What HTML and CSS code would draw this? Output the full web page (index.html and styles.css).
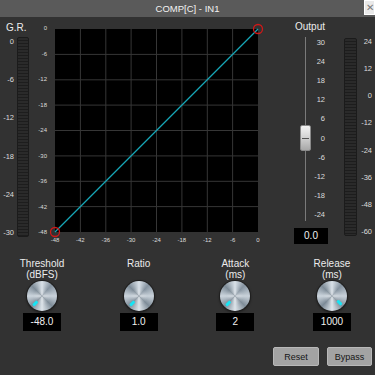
FILE: index.html
```html
<!DOCTYPE html>
<html>
<head>
<meta charset="utf-8">
<link rel="stylesheet" href="styles.css">
</head>
<body>
<div class="app">
  <header class="titlebar">
    <span class="tb-side"></span>
    <span class="title">COMP[C] - IN1</span>
    <span class="tb-side tb-right"><span class="close">✕</span></span>
  </header>

  <main class="main">
    <section class="gr">
      <div class="heading gr-title">G.R.</div>
      <div class="meter-row">
        <div class="scale scale-gr"><span>0</span><span>-6</span><span>-12</span><span>-18</span><span>-24</span><span>-30</span></div>
        <div class="meter gr-meter"></div>
      </div>
    </section>

    <section class="chart">
      <div class="chart-row">
        <div class="scale scale-y"><span>0</span><span>-6</span><span>-12</span><span>-18</span><span>-24</span><span>-30</span><span>-36</span><span>-42</span><span>-48</span></div>
        <svg class="graph" width="203" height="203" viewBox="0 0 203 203">
          <rect x="0" y="0" width="203" height="203" fill="#000"/>
          <g stroke="#363636" stroke-width="1">
            <line x1="25.4" y1="0" x2="25.4" y2="203"/>
            <line x1="50.8" y1="0" x2="50.8" y2="203"/>
            <line x1="76.1" y1="0" x2="76.1" y2="203"/>
            <line x1="101.5" y1="0" x2="101.5" y2="203"/>
            <line x1="126.9" y1="0" x2="126.9" y2="203"/>
            <line x1="152.3" y1="0" x2="152.3" y2="203"/>
            <line x1="177.6" y1="0" x2="177.6" y2="203"/>
            <line x1="0" y1="25.4" x2="203" y2="25.4"/>
            <line x1="0" y1="50.8" x2="203" y2="50.8"/>
            <line x1="0" y1="76.1" x2="203" y2="76.1"/>
            <line x1="0" y1="101.5" x2="203" y2="101.5"/>
            <line x1="0" y1="126.9" x2="203" y2="126.9"/>
            <line x1="0" y1="152.3" x2="203" y2="152.3"/>
            <line x1="0" y1="177.6" x2="203" y2="177.6"/>
          </g>
          <line x1="0" y1="203" x2="203" y2="0" stroke="#16a6b6" stroke-width="1.3"/>
          <circle cx="203" cy="0" r="4.5" fill="none" stroke="#d01818" stroke-width="1.3"/>
          <circle cx="0" cy="203" r="4.5" fill="none" stroke="#d01818" stroke-width="1.3"/>
        </svg>
      </div>
      <div class="scale-x"><span>-48</span><span>-42</span><span>-36</span><span>-30</span><span>-24</span><span>-18</span><span>-12</span><span>-6</span><span>0</span></div>
    </section>

    <section class="output">
      <div class="out-left">
        <div class="heading out-title">Output</div>
        <div class="fader-row">
          <div class="fader">
            <div class="track track-top"></div>
            <div class="thumb"><span class="thumb-line"></span></div>
            <div class="track track-bottom"></div>
          </div>
          <div class="scale scale-out"><span>30</span><span>24</span><span>18</span><span>12</span><span>6</span><span>0</span><span>-6</span><span>-12</span><span>-18</span><span>-24</span></div>
        </div>
        <div class="valbox out-val">0.0</div>
      </div>
      <div class="out-meter">
        <div class="meter om-meter"></div>
        <div class="scale scale-om"><span>24</span><span>12</span><span>0</span><span>-12</span><span>-24</span><span>-36</span><span>-48</span><span>-60</span></div>
      </div>
    </section>
  </main>

  <section class="knobs">
    <div class="knob-col">
      <div class="knob-label">Threshold<br>(dBFS)</div>
      <div class="knob"><span class="ind ind-min"></span></div>
      <div class="valbox kval">-48.0</div>
    </div>
    <div class="knob-col">
      <div class="knob-label">Ratio</div>
      <div class="knob"><span class="ind ind-min"></span></div>
      <div class="valbox kval">1.0</div>
    </div>
    <div class="knob-col">
      <div class="knob-label">Attack<br>(ms)</div>
      <div class="knob"><span class="ind ind-min"></span></div>
      <div class="valbox kval">2</div>
    </div>
    <div class="knob-col">
      <div class="knob-label">Release<br>(ms)</div>
      <div class="knob"><span class="ind ind-max"></span></div>
      <div class="valbox kval">1000</div>
    </div>
  </section>

  <footer class="buttons">
    <button class="btn">Reset</button>
    <button class="btn">Bypass</button>
  </footer>
</div>
</body>
</html>
```

FILE: styles.css
```css
* { box-sizing: border-box; }
html, body { margin: 0; padding: 0; }
body {
  width: 375px;
  height: 375px;
  overflow: hidden;
  background: #323232;
  font-family: "Liberation Sans", Arial, sans-serif;
  color: #e4e4e4;
}
.app { width: 375px; height: 375px; display: flex; flex-direction: column; }

/* title bar */
.titlebar {
  height: 17px;
  background: #5a5a5a;
  display: grid;
  grid-template-columns: 1fr auto 1fr;
  align-items: start;
}
.title { font-size: 9.5px; line-height: 17px; color: #f2f2f2; }
.tb-right { display: flex; justify-content: flex-end; }
.close {
  width: 11px; height: 15px;
  background: #e9e9e9;
  border: 1px solid #ffffff;
  color: #7a7a7a;
  font-size: 10px;
  line-height: 13px;
  text-align: center;
}

/* main */
.main { height: 233px; display: flex; align-items: flex-start; }

.heading { font-size: 10px; line-height: 12px; color: #ececec; }

.scale { display: flex; flex-direction: column; justify-content: space-between; font-size: 7.5px; color: #dcdcdc; text-align: right; }
.scale span { display: block; line-height: 9px; }

.meter {
  border: 1px solid #1b1b1b;
  border-radius: 2px;
  background: repeating-linear-gradient(to bottom, #2a2a2a 0 2px, #1d1d1d 2px 3px);
}

.gr { width: 29px; padding-top: 5px; }
.gr-title { padding-left: 6px; }
.meter-row { display: flex; margin-top: 3px; height: 200px; gap: 3px; }
.scale-gr { width: 14px; }
.gr-meter { width: 12px; }

.chart { width: 229px; padding-top: 7px; }
.chart-row { display: flex; align-items: flex-start; gap: 8px; }
.scale-y { width: 18px; height: 212px; font-size: 6px; }
.scale-y span { line-height: 8px; }
.graph { display: block; margin-top: 5px; overflow: visible; flex: none; }
.scale-x { display: flex; justify-content: space-between; width: 223px; margin-left: 16px; font-size: 6px; color: #dcdcdc; }
.scale-x span { width: 20px; text-align: center; line-height: 8px; }

.output { display: flex; padding-left: 32px; }
.out-left { width: 40px; padding-top: 4px; }
.out-title { text-align: center; }
.fader-row { display: flex; margin-top: 4px; height: 184px; }
.fader { width: 11px; margin-left: 10px; display: flex; flex-direction: column; align-items: center; }
.track { width: 1px; background: #7a7a7a; }
.track-top { height: 88px; }
.track-bottom { flex: 1; }
.thumb {
  width: 11px; height: 26px;
  border-radius: 2px;
  background: linear-gradient(to bottom, #f4f4f4 0%, #d8d8d8 40%, #a8a8a8 100%);
  border: 1px solid #8a8a8a;
  display: flex; align-items: center; justify-content: center;
}
.thumb-line { width: 7px; height: 1px; background: #555; }
.scale-out { width: 14px; padding: 2px 0; }
.scale-out span { line-height: 8px; }
.valbox {
  background: #000;
  color: #f0f0f0;
  font-size: 10px;
  text-align: center;
  border: 1px solid #000;
}
.out-val { width: 34px; height: 16px; line-height: 14px; margin-top: 7px; margin-left: 4px; }

.out-meter { display: flex; margin-left: 14px; padding-top: 21px; }
.om-meter { width: 13px; height: 198px; }
.scale-om { width: 15px; height: 198px; }
.scale-om span { line-height: 8px; }

/* knobs */
.knobs { display: flex; gap: 12.67px; padding-top: 8px; }
.knob-col { width: 84px; display: flex; flex-direction: column; align-items: center; }
.knob-label { height: 22px; font-size: 10px; line-height: 11px; text-align: center; color: #ececec; }
.knob {
  position: relative;
  width: 30px; height: 30px;
  margin-top: 1px;
  border-radius: 50%;
  background:
    radial-gradient(circle at 50% 50%, rgba(255,255,255,0.35) 0%, rgba(255,255,255,0) 40%, rgba(0,0,0,0) 70%, rgba(0,0,0,0.35) 100%),
    conic-gradient(from 0deg, #d9e1e8, #8593a0 40deg, #c9d2da 90deg, #7f8d99 135deg, #dde4ea 180deg, #7c8a97 225deg, #ccd5dd 270deg, #7e8c98 315deg, #d9e1e8);
  box-shadow: 0 0 0 1px #202020, 0 1px 3px rgba(0,0,0,0.7);
}
.ind { position: absolute; inset: 0; }
.ind::after {
  content: "";
  position: absolute;
  left: 14px; bottom: 2px;
  width: 2.5px; height: 6px;
  border-radius: 1px;
  background: #18e4f4;
}
.ind-min { transform: rotate(45deg); }
.ind-max { transform: rotate(-45deg); }
.kval { width: 38px; height: 18px; line-height: 16px; margin-top: 2px; }

/* buttons */
.buttons { display: flex; justify-content: flex-end; gap: 8px; padding-right: 3px; margin-top: 16px; }
.btn {
  height: 19px;
  padding: 0;
  font-family: "Liberation Sans", Arial, sans-serif;
  font-size: 9px;
  color: #151515;
  background: #a3a3a3;
  border: 1px solid #b8b8b8;
  border-radius: 2px;
}
.btn:first-child { width: 46px; }
.btn:last-child { width: 45px; }
```
